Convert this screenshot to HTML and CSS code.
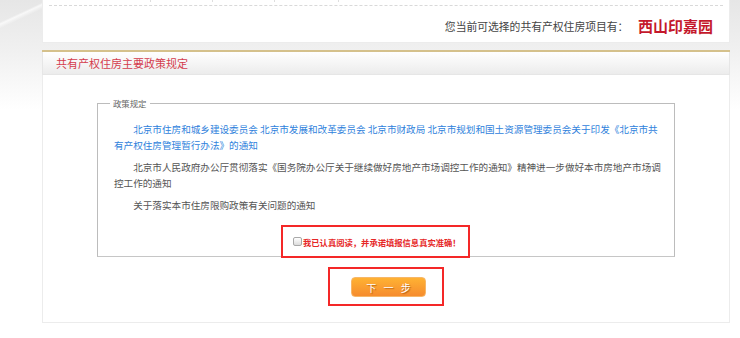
FILE: index.html
```html
<!DOCTYPE html>
<html lang="zh-CN">
<head>
    <meta charset="UTF-8">
    <meta name="viewport" content="width=device-width, initial-scale=1.0">
    <title>共有产权住房申请</title>
    <link rel="stylesheet" href="styles.css">
</head>
<body>
    <div class="wrap">
        <div class="project-box">
            <div class="tab-line">
                <span class="tab tab-first"></span>
                <span class="tab"></span>
                <span class="tab"></span>
                <span class="tab tab-wide"></span>
            </div>
            <div class="project-row">
                <span class="project-label">您当前可选择的共有产权住房项目有：</span>
                <span class="project-name">西山印嘉园</span>
            </div>
        </div>

        <div class="panel">
            <div class="panel-title">共有产权住房主要政策规定</div>
            <div class="panel-body">
                <fieldset class="policy">
                    <legend>政策规定</legend>
                    <p class="policy-item"><a href="#">北京市住房和城乡建设委员会 北京市发展和改革委员会 北京市财政局 北京市规划和国土资源管理委员会关于印发《北京市共有产权住房管理暂行办法》的通知</a></p>
                    <p class="policy-item">北京市人民政府办公厅贯彻落实《国务院办公厅关于继续做好房地产市场调控工作的通知》精神进一步做好本市房地产市场调控工作的通知</p>
                    <p class="policy-item">关于落实本市住房限购政策有关问题的通知</p>

                    <div class="agree-row">
                        <label class="agree-box"><input type="checkbox" class="agree-check">我已认真阅读，并承诺填报信息真实准确！</label>
                    </div>
                </fieldset>

                <div class="next-box">
                    <button class="next-btn">下 一 步</button>
                </div>
            </div>
        </div>
    </div>
</body>
</html>
```

FILE: styles.css
```css
html, body {
    height: 100%;
}

body {
    margin: 0;
    font-family: "Microsoft YaHei", "Noto Sans CJK SC", sans-serif;
    color: #555;
    background:
        linear-gradient(155deg, transparent 0, transparent 20px, rgba(255,255,255,0.7) 22px, transparent 26px) no-repeat 0 0 / 42px 60px,
        #fff linear-gradient(to bottom, #e6e6e6 0, #f0f0f0 50px, #fff 110px) no-repeat;
}

.wrap {
    width: 688px;
    margin-left: 42px;
}

/* 顶部项目信息 */
.project-box {
    background-color: #fff;
    border: 1px solid #ececec;
    border-top: 0;
    padding: 0 6px;
}

.tab-line {
    display: flex;
    height: 5px;
    border-bottom: 1px dashed #d9d9d9;
}

.tab {
    width: 61px;
    height: 2px;
    border-right: 1px solid #dedede;
}

.tab-first {
    width: 101px;
}

.tab-wide {
    width: 63px;
}

.project-row {
    height: 36px;
    line-height: 36px;
    text-align: right;
    padding-right: 10px;
}

.project-label {
    font-size: 10.8px;
    color: #444;
}

.project-name {
    margin-left: 6px;
    font-size: 15px;
    font-weight: bold;
    color: #c4182c;
    vertical-align: -1px;
}

/* 政策面板 */
.panel {
    margin-top: 7px;
    border-top: 2px solid #d5c18c;
}

.panel-title {
    height: 22px;
    line-height: 22px;
    padding-left: 13px;
    font-size: 11px;
    color: #d43c4d;
    background: linear-gradient(to bottom, #fff, #ececec);
    border: 1px solid #e6e6e6;
    border-top: 0;
}

.panel-body {
    background-color: #fff;
    border: 1px solid #ececec;
    border-top: 0;
    padding: 23px 0 16px;
}

.policy {
    margin: 0 54px;
    padding: 13px 10px 0 16px;
    border: 1px solid #bcbcbc;
    border-bottom-color: #c6c6c6;
}

.policy legend {
    margin-left: -4px;
    padding: 0 3px;
    font-size: 8.4px;
    line-height: 10px;
    color: #666;
}

.policy-item {
    margin: 0 0 6px;
    font-size: 9.6px;
    line-height: 16px;
    text-indent: 2em;
}

.policy-item a {
    color: #2f82dc;
    text-decoration: none;
}

.agree-row {
    margin-top: 12px;
    padding-left: 167px;
}

.agree-box {
    display: inline-flex;
    align-items: center;
    height: 29px;
    padding: 0 7px 0 10px;
    margin-bottom: -2px;
    border: 2px solid #f42828;
    font-size: 8.3px;
    font-weight: bold;
    color: #e62727;
    vertical-align: top;
}

.agree-check {
    appearance: none;
    width: 9px;
    height: 9px;
    margin: 0 1px 0 0;
    border: 1px solid #a9a9a9;
    border-radius: 2px;
    background: linear-gradient(to bottom, #fff, #dcdcdc);
}

.next-box {
    width: 75px;
    margin: 10px auto 0;
    padding: 8px 16px 7px 21px;
    border: 2px solid #f42828;
}

.next-btn {
    display: block;
    width: 75px;
    height: 20px;
    padding: 0;
    border: 1px solid #f7b768;
    border-radius: 4px;
    background: linear-gradient(to bottom, #ffb233, #f68c2e);
    font-family: "Microsoft YaHei", "Noto Sans CJK SC", sans-serif;
    font-size: 10px;
    letter-spacing: 2.5px;
    text-indent: 2.5px;
    color: #fff;
    text-shadow: 1px 1px 1px rgba(140, 60, 0, 0.6);
}
```
